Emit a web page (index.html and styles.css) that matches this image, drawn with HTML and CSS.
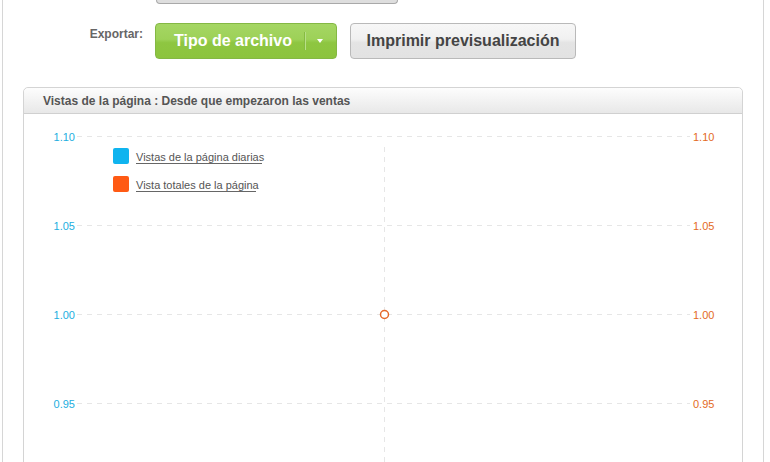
FILE: index.html
```html
<!DOCTYPE html>
<html lang="es">
<head>
<meta charset="utf-8">
<link rel="stylesheet" href="styles.css">
</head>
<body>
<div class="page">
  <div class="top-row"><div class="stub-btn"></div></div>
  <div class="export-row">
    <div class="export-label">Exportar:</div>
    <button class="btn btn-green"><span class="btn-text">Tipo de archivo</span><span class="sep"></span><span class="caret"></span></button>
    <button class="btn btn-gray">Imprimir previsualización</button>
  </div>
  <div class="panel">
    <div class="panel-head">Vistas de la página : Desde que empezaron las ventas</div>
    <div class="panel-body">
      <svg class="chart" width="718" height="360" viewBox="0 0 718 360">
        <g class="grid">
          <line x1="53" y1="22.5" x2="666" y2="22.5"/>
          <line x1="53" y1="111.5" x2="666" y2="111.5"/>
          <line x1="53" y1="200.5" x2="666" y2="200.5"/>
          <line x1="53" y1="289.5" x2="666" y2="289.5"/>
          <line x1="360.5" y1="33" x2="360.5" y2="360"/>
        </g>
        <g class="lab-left">
          <text x="51" y="26.5">1.10</text>
          <text x="51" y="115.5">1.05</text>
          <text x="51" y="204.5">1.00</text>
          <text x="51" y="293.5">0.95</text>
        </g>
        <g class="lab-right">
          <text x="669" y="26.5">1.10</text>
          <text x="669" y="115.5">1.05</text>
          <text x="669" y="204.5">1.00</text>
          <text x="669" y="293.5">0.95</text>
        </g>
        <circle class="point" cx="360.5" cy="200.5" r="4"/>
        <g class="legend">
          <rect x="89" y="34" width="16" height="16" rx="2" fill="#0fb4ef"/>
          <text x="112" y="47">Vistas de la página diarias</text>
          <line x1="112" y1="49.5" x2="238" y2="49.5"/>
          <rect x="89" y="62" width="16" height="16" rx="2" fill="#ff5a14"/>
          <text x="112" y="75">Vista totales de la página</text>
          <line x1="112" y1="77.5" x2="232" y2="77.5"/>
        </g>
      </svg>
    </div>
  </div>
</div>
</body>
</html>
```
FILE: styles.css
```css
html, body {
  margin: 0;
  padding: 0;
  background: #fff;
  font-family: "Liberation Sans", Arial, sans-serif;
  overflow: hidden;
}
.page {
  margin-left: 2px;
  width: 762px;
  height: 470px;
  border-left: 1px solid #d6d6d6;
  border-right: 1px solid #d6d6d6;
  box-sizing: border-box;
}
.top-row {
  height: 5px;
  padding-left: 153px;
}
.stub-btn {
  width: 242px;
  height: 4px;
  box-sizing: border-box;
  border: 1px solid #a9a9a9;
  border-top: none;
  border-radius: 0 0 4px 4px;
  background: #dedede;
}
.export-row {
  display: flex;
  align-items: flex-start;
  margin-top: 18px;
  height: 36px;
}
.export-label {
  width: 140px;
  text-align: right;
  font-size: 12px;
  font-weight: bold;
  color: #666;
  padding-top: 4px;
  box-sizing: border-box;
}
.btn {
  font-family: "Liberation Sans", Arial, sans-serif;
  font-size: 16px;
  font-weight: bold;
  height: 36px;
  border-radius: 4px;
  box-sizing: border-box;
  padding: 0;
  display: flex;
  align-items: center;
}
.btn-green {
  margin-left: 12px;
  width: 182px;
  color: #fff;
  border: 1px solid #84b844;
  background: linear-gradient(#a5d663 0%, #9dd158 45%, #8ec641 55%, #8cc43e 100%);
  padding-left: 18px;
}
.btn-text {
  width: 118px;
}
.sep {
  width: 1px;
  height: 18px;
  background: #b8df88;
  margin-left: 13px;
  box-shadow: -1px 0 0 #86bb42;
}
.caret {
  margin-left: 11px;
  width: 0;
  height: 0;
  border-left: 3px solid transparent;
  border-right: 3px solid transparent;
  border-top: 4px solid #fff;
}
.btn-gray {
  margin-left: 13px;
  width: 226px;
  justify-content: center;
  color: #444;
  border: 1px solid #b9b9b9;
  background: linear-gradient(#f7f7f7 0%, #f0f0f0 45%, #e4e4e4 55%, #e2e2e2 100%);
}
.panel {
  margin: 28px 0 0 20px;
  width: 720px;
  border: 1px solid #d4d4d4;
  border-radius: 5px 5px 0 0;
  box-sizing: border-box;
}
.panel-head {
  height: 26px;
  box-sizing: border-box;
  border-bottom: 1px solid #d0d0d0;
  border-radius: 5px 5px 0 0;
  background: linear-gradient(#fdfdfd, #e8e8e8);
  font-size: 12px;
  font-weight: bold;
  color: #555;
  padding: 6px 0 0 19px;
}
.panel-body {
  height: 360px;
}
.chart {
  display: block;
}
.grid line {
  stroke: #e6e6e6;
  stroke-width: 1;
  stroke-dasharray: 5 5;
}
.lab-left text, .lab-right text {
  font-family: "Liberation Sans", Arial, sans-serif;
  font-size: 11px;
}
.lab-left text {
  fill: #22aee0;
  text-anchor: end;
}
.lab-right text {
  fill: #e36a24;
}
.point {
  fill: #fff;
  stroke: #e5682a;
  stroke-width: 1.5;
}
.legend text {
  font-family: "Liberation Sans", Arial, sans-serif;
  font-size: 11px;
  fill: #555;
}
.legend line {
  stroke: #666;
  stroke-width: 1;
}
```
